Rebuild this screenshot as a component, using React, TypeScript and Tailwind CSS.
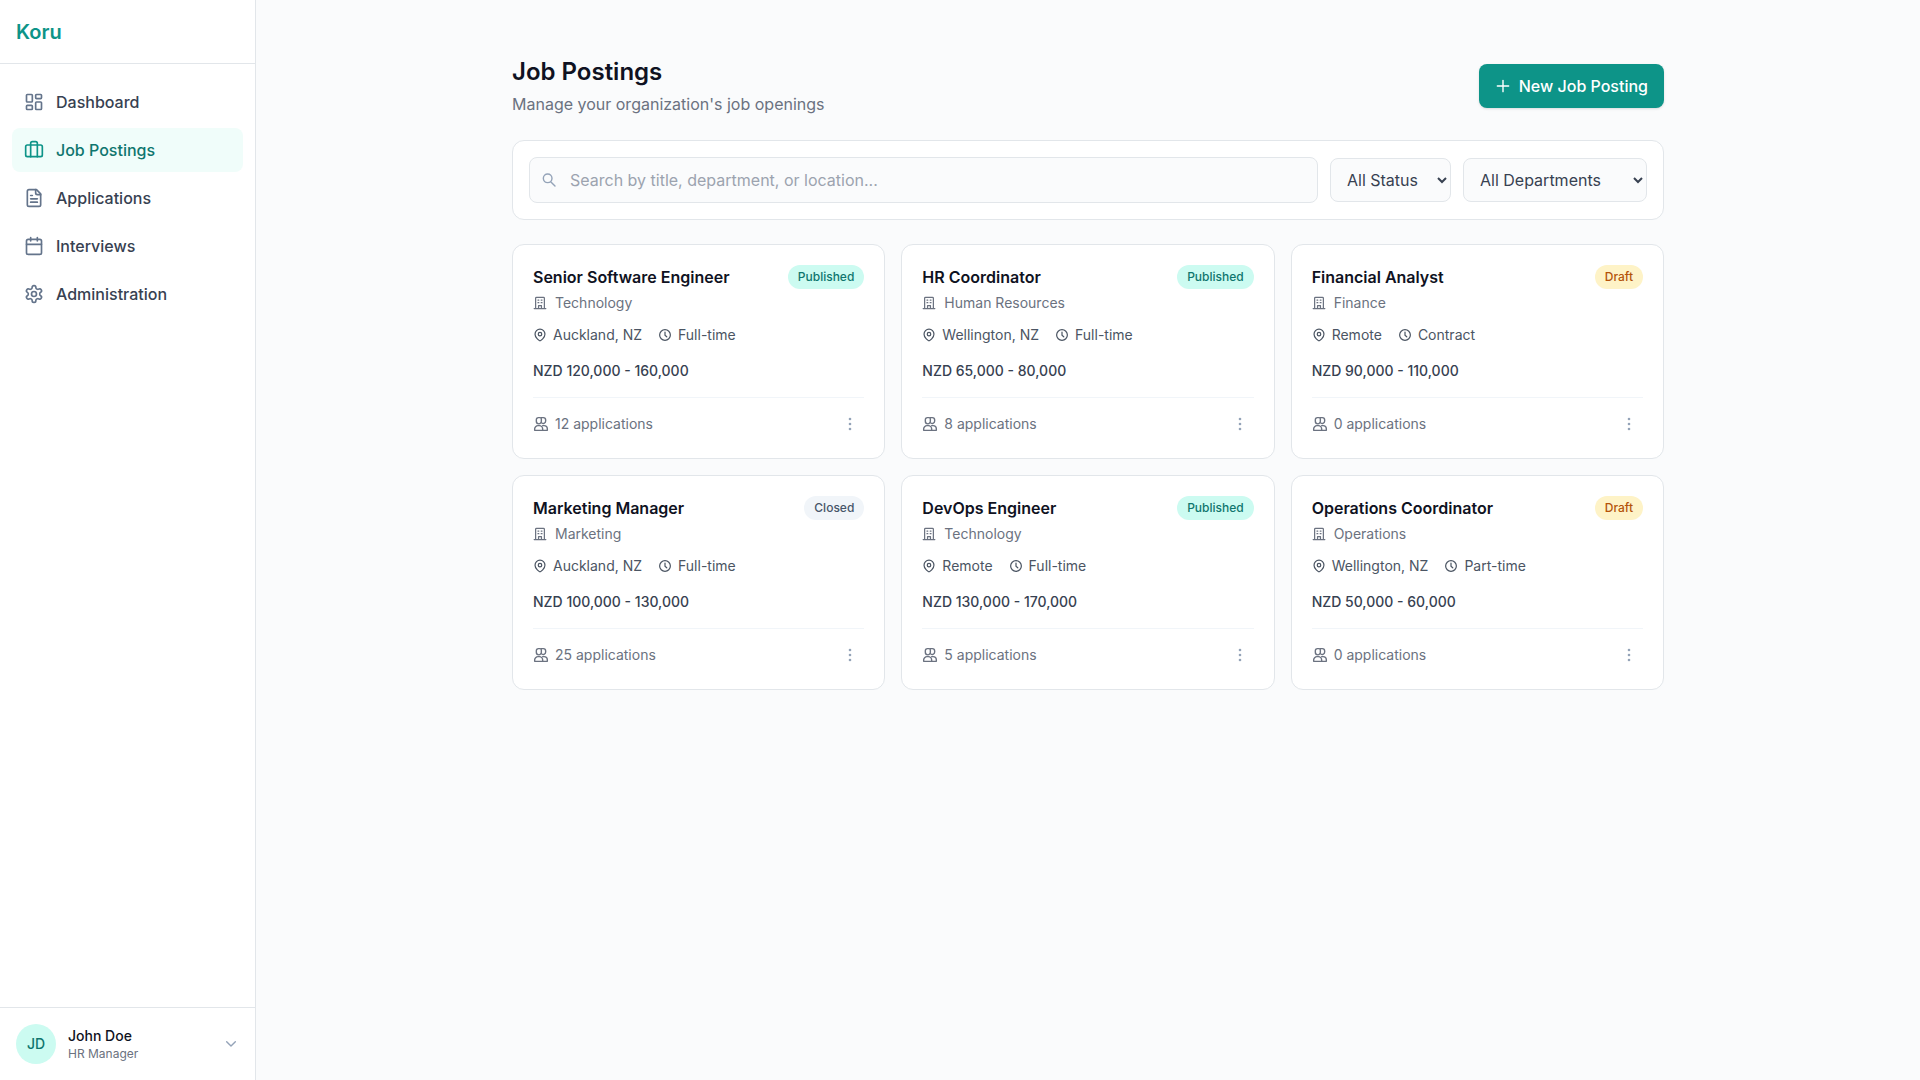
import clsx from "clsx"
import {
  LuBriefcase,
  LuCalendar,
  LuFileText,
  LuLayoutDashboard,
  LuSettings,
} from "react-icons/lu"

const navItems = [
  { label: "Dashboard", icon: LuLayoutDashboard },
  { label: "Job Postings", icon: LuBriefcase, active: true },
  { label: "Applications", icon: LuFileText },
  { label: "Interviews", icon: LuCalendar },
  { label: "Administration", icon: LuSettings },
]

type Status = "Published" | "Draft" | "Closed"

type Job = {
  title: string
  department: string
  location: string
  type: string
  salary: string
  applications: number
  status: Status
}

const jobs: Job[] = [
  { title: "Senior Software Engineer", department: "Technology", location: "Auckland, NZ", type: "Full-time", salary: "NZD 120,000 - 160,000", applications: 12, status: "Published" },
  { title: "HR Coordinator", department: "Human Resources", location: "Wellington, NZ", type: "Full-time", salary: "NZD 65,000 - 80,000", applications: 8, status: "Published" },
  { title: "Financial Analyst", department: "Finance", location: "Remote", type: "Contract", salary: "NZD 90,000 - 110,000", applications: 0, status: "Draft" },
  { title: "Marketing Manager", department: "Marketing", location: "Auckland, NZ", type: "Full-time", salary: "NZD 100,000 - 130,000", applications: 25, status: "Closed" },
  { title: "DevOps Engineer", department: "Technology", location: "Remote", type: "Full-time", salary: "NZD 130,000 - 170,000", applications: 5, status: "Published" },
  { title: "Operations Coordinator", department: "Operations", location: "Wellington, NZ", type: "Part-time", salary: "NZD 50,000 - 60,000", applications: 0, status: "Draft" },
]

const statusStyles: Record<Status, string> = {
  Published: "bg-[#ccfbf1] text-[#0f766e]",
  Draft: "bg-[#fef3c7] text-[#b45309]",
  Closed: "bg-[#f1f5f9] text-[#475569]",
}

const iconPaths = {
  building: "M2 21.5h20 M4.5 21.5V4A1.5 1.5 0 0 1 6 2.5h12A1.5 1.5 0 0 1 19.5 4v17.5 M9.5 21.5v-5h5v5 M8.5 7H10 M14 7h1.5 M8.5 11.5H10 M14 11.5h1.5",
  pin: "M12 22c-1 0-8.5-5-8.5-11.5a8.5 8.5 0 0 1 17 0C20.5 17 13 22 12 22Z M15 10.5a3 3 0 1 1-6 0a3 3 0 0 1 6 0Z",
  clock: "M21.2 12a9.2 9.2 0 1 1-18.4 0a9.2 9.2 0 0 1 18.4 0Z M12 7v5.5l3 2.5",
  users: "M8.5 2.5h2a2 2 0 0 1 2 2V8A3.5 3.5 0 0 1 5 8V5.5a3 3 0 0 1 3.5-3Z M12.5 2.5h3A3.5 3.5 0 0 1 19 6v1.5a3.7 3.7 0 0 1-6.5 2.5 M2.5 21.5v-2a5 5 0 0 1 5-5h2a5 5 0 0 1 5 5v2Z M14.5 14.5h2a5 5 0 0 1 5 5v2h-7",
  search: "M16.5 9.5a6.5 6.5 0 1 1-13 0a6.5 6.5 0 0 1 13 0Z M14.5 14.5L21 21",
  plus: "M12 3.5v17 M3.5 12h17",
  chevron: "M5.5 8.5L12 15l6.5-6.5",
}

function Icon({ name, className }: { name: keyof typeof iconPaths; className?: string }) {
  return (
    <svg
      viewBox="0 0 24 24"
      fill="none"
      stroke="currentColor"
      strokeWidth={2.1}
      strokeLinecap="round"
      strokeLinejoin="round"
      aria-hidden="true"
      className={clsx("shrink-0", className)}
    >
      <path d={iconPaths[name]} />
    </svg>
  )
}

function Sidebar() {
  return (
    <aside className="sticky top-0 flex h-screen w-64 shrink-0 flex-col border-r border-[#e2e6ea] bg-white">
      <div className="flex h-16 items-center border-b border-[#e2e6ea] px-4">
        <a href="#" className="text-xl font-semibold text-[#0d9488]">
          Koru
        </a>
      </div>
      <nav className="flex flex-1 flex-col gap-1 px-3 py-4">
        {navItems.map(({ label, icon: NavIcon, active }) => (
          <a
            key={label}
            href="#"
            aria-current={active ? "page" : undefined}
            className={clsx(
              "flex items-center gap-3 rounded-lg px-3 py-2.5 font-medium",
              active ? "bg-[#f0fdfa] text-[#0f766e]" : "text-[#374151]"
            )}
          >
            <NavIcon size={20} className={active ? "text-[#0d9488]" : "text-[#64748b]"} />
            {label}
          </a>
        ))}
      </nav>
      <div className="border-t border-[#e2e6ea] p-4">
        <button className="flex w-full items-center gap-3 text-left">
          <span className="flex size-10 items-center justify-center rounded-full bg-[#ccfbf1] text-sm font-medium text-[#0f766e]">
            JD
          </span>
          <span className="flex flex-1 flex-col">
            <span className="text-sm font-medium text-[#0f1222]">John Doe</span>
            <span className="text-xs text-[#6b7280]">HR Manager</span>
          </span>
          <Icon name="chevron" className="size-4 text-[#94a3b8]" />
        </button>
      </div>
    </aside>
  )
}

function JobCard({ job }: { job: Job }) {
  return (
    <article className="rounded-xl border border-[#e2e6ea] bg-white p-5">
      <div className="flex items-start justify-between gap-3">
        <h2 className="font-semibold text-[#0f1222]">{job.title}</h2>
        <span className={clsx("rounded-full px-2.5 py-1 text-xs font-medium", statusStyles[job.status])}>
          {job.status}
        </span>
      </div>
      <p className="mt-1 flex items-center gap-2 text-sm text-[#6b7280]">
        <Icon name="building" className="size-3.5" />
        {job.department}
      </p>
      <div className="mt-3 flex items-center gap-4 text-sm text-[#4b5563]">
        <span className="flex items-center gap-1.5">
          <Icon name="pin" className="size-3.5" />
          {job.location}
        </span>
        <span className="flex items-center gap-1.5">
          <Icon name="clock" className="size-3.5" />
          {job.type}
        </span>
      </div>
      <p className="mt-4 text-sm font-medium text-[#374151]">{job.salary}</p>
      <div className="mt-4 flex items-center justify-between border-t border-slate-100 pt-3">
        <span className="flex items-center gap-1.5 text-sm text-[#6b7280]">
          <Icon name="users" className="size-4" />
          {job.applications} applications
        </span>
        <button aria-label="More actions" className="rounded-lg p-1.5 text-[#94a3b8]">
          <svg viewBox="0 0 16 16" fill="currentColor" className="size-4">
            <circle cx="8" cy="3" r="1.3" />
            <circle cx="8" cy="8" r="1.3" />
            <circle cx="8" cy="13" r="1.3" />
          </svg>
        </button>
      </div>
    </article>
  )
}

export default function App() {
  return (
    <div className="flex min-h-screen bg-[#fafbfc] font-['Inter',sans-serif] text-base">
      <Sidebar />
      <main className="flex-1 px-8 py-14">
        <div className="mx-auto flex max-w-6xl flex-col gap-6">
          <div className="flex items-center justify-between">
            <div>
              <h1 className="text-2xl font-semibold text-[#0f1222]">Job Postings</h1>
              <p className="mt-1 text-[#6b7280]">Manage your organization's job openings</p>
            </div>
            <button className="flex items-center gap-2 rounded-lg bg-[#0d9488] px-4 py-2.5 font-medium text-white shadow-sm">
              <Icon name="plus" className="size-4" />
              New Job Posting
            </button>
          </div>
          <div className="flex items-center gap-3 rounded-xl border border-[#e2e6ea] bg-white p-4">
            <div className="relative flex-1">
              <Icon name="search" className="absolute top-1/2 left-3 size-4 -translate-y-1/2 text-[#94a3b8]" />
              <input
                type="text"
                aria-label="Search job postings"
                placeholder="Search by title, department, or location..."
                className="block w-full rounded-lg border border-[#e2e6ea] bg-[#fafbfc] py-2.5 pr-4 pl-10 placeholder:text-[#9ca3af]"
              />
            </div>
            <select
              aria-label="Status"
              className="h-11 rounded-lg border border-[#e2e6ea] bg-[#fafbfc] px-3 text-[#374151]"
            >
              <option>All Status</option>
              <option>Draft</option>
              <option>Published</option>
              <option>Closed</option>
            </select>
            <select
              aria-label="Department"
              className="h-11 rounded-lg border border-[#e2e6ea] bg-[#fafbfc] px-3 text-[#374151]"
            >
              <option>All Departments</option>
              <option>Technology</option>
              <option>Human Resources</option>
              <option>Finance</option>
              <option>Marketing</option>
              <option>Operations</option>
            </select>
          </div>
          <div className="grid grid-cols-3 gap-4">
            {jobs.map((job) => (
              <JobCard key={job.title} job={job} />
            ))}
          </div>
        </div>
      </main>
    </div>
  )
}
